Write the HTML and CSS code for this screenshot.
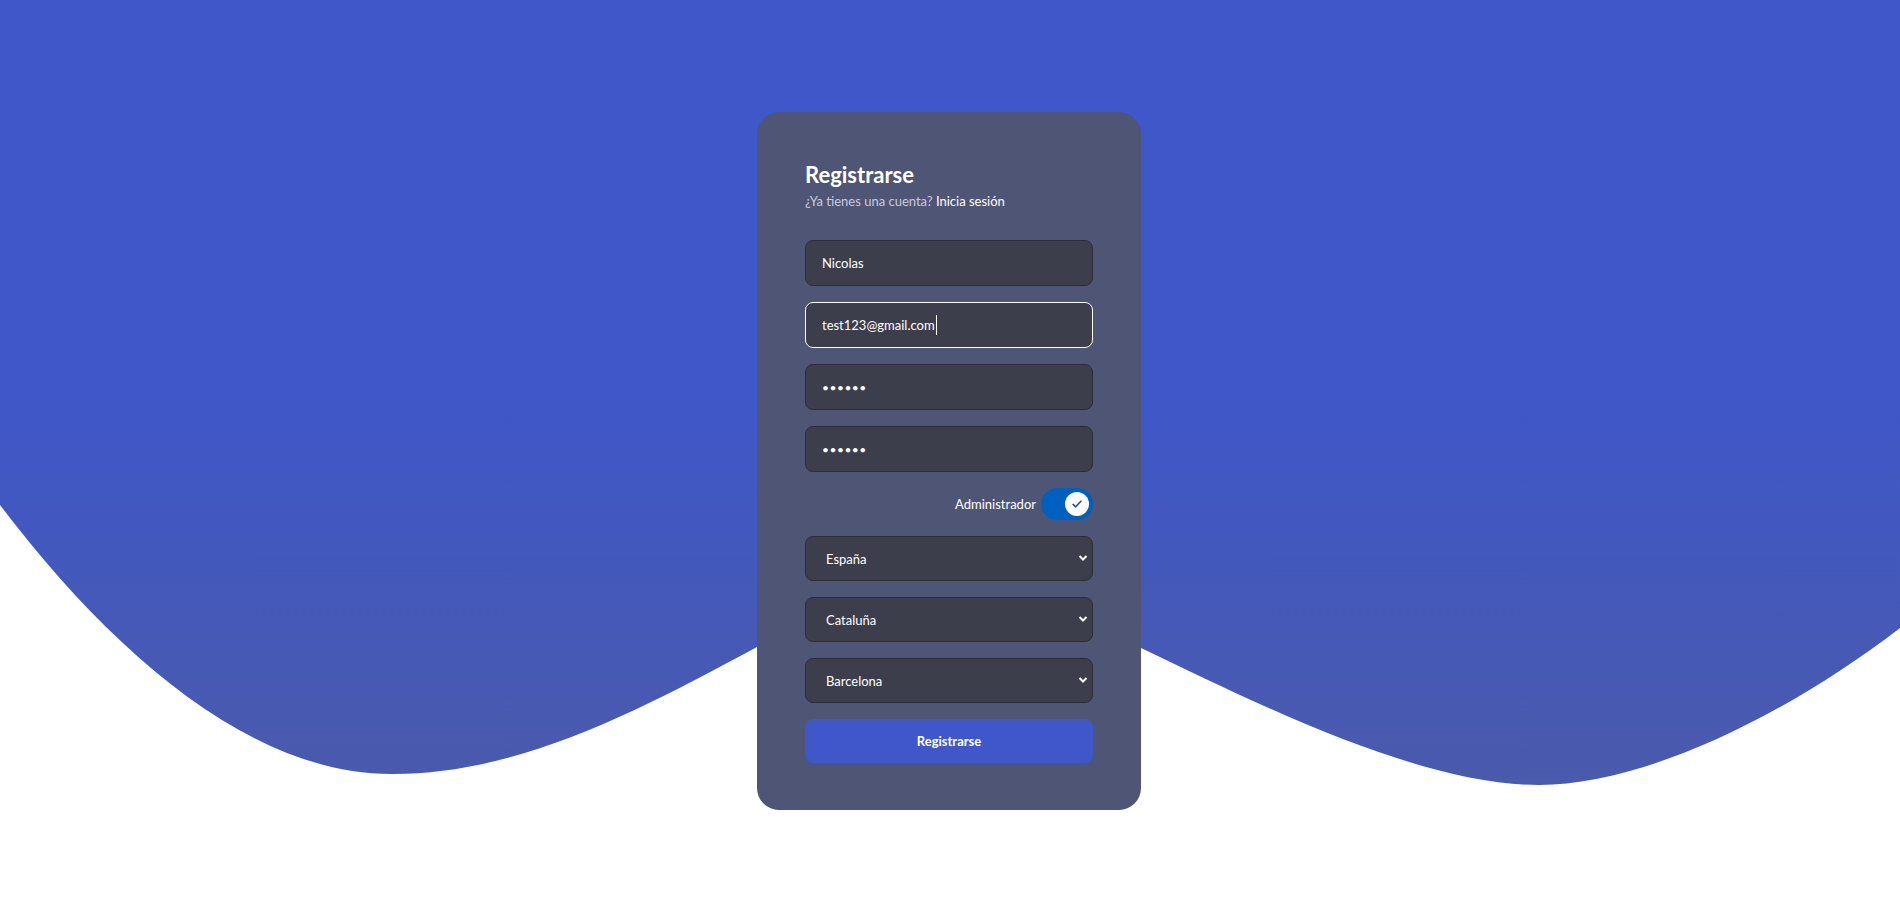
FILE: index.html
```html
<!DOCTYPE html>
<html lang="es">
<head>
<meta charset="utf-8">
<title>Registrarse</title>
<link rel="stylesheet" href="styles.css">
</head>
<body>
<svg class="wave" viewBox="0 0 1900 920" preserveAspectRatio="none" aria-hidden="true">
  <defs>
    <linearGradient id="wg" x1="0" y1="400" x2="0" y2="790" gradientUnits="userSpaceOnUse">
      <stop offset="0" stop-color="#3f57c8"/>
      <stop offset="1" stop-color="#4a5aab"/>
    </linearGradient>
  </defs>
  <path fill="url(#wg)" d="M0,0 H1900 V628 C1780,720 1640,785 1539,785 C1420,785 1260,705 1141,648 C1070,614 1010,590 950,590 C880,590 830,608 757,647 C640,710 520,774 393,774 C250,775 110,650 0,505 Z"/>
</svg>
<main class="page">
  <section class="card">
    <header class="card-head">
      <h1 class="title">Registrarse</h1>
      <p class="subtitle">¿Ya tienes una cuenta? <a class="link" href="#">Inicia sesión</a></p>
    </header>
    <form class="form">
      <input class="field" type="text" value="Nicolas">
      <div class="field-wrap">
        <input class="field field-focus" type="email" value="test123@gmail.com">
        <span class="caret"></span>
      </div>
      <input class="field field-pass" type="password" value="123456">
      <input class="field field-pass" type="password" value="123456">
      <div class="switch-row">
        <span class="switch-label">Administrador</span>
        <span class="switch">
          <span class="knob">
            <svg viewBox="0 0 16 16" width="14" height="14"><path d="M3.5 8.5 L6.5 11.2 L12.5 4.8" fill="none" stroke="#1d4f9a" stroke-width="1.8" stroke-linecap="round" stroke-linejoin="round"/></svg>
          </span>
        </span>
      </div>
      <div class="select-wrap">
        <select class="select"><option>España</option></select>
        <svg class="chev" viewBox="0 0 10 8" width="10" height="8"><path d="M1.5 2 L5 5.5 L8.5 2" fill="none" stroke="#fff" stroke-width="2"/></svg>
      </div>
      <div class="select-wrap">
        <select class="select"><option>Cataluña</option></select>
        <svg class="chev" viewBox="0 0 10 8" width="10" height="8"><path d="M1.5 2 L5 5.5 L8.5 2" fill="none" stroke="#fff" stroke-width="2"/></svg>
      </div>
      <div class="select-wrap">
        <select class="select"><option>Barcelona</option></select>
        <svg class="chev" viewBox="0 0 10 8" width="10" height="8"><path d="M1.5 2 L5 5.5 L8.5 2" fill="none" stroke="#fff" stroke-width="2"/></svg>
      </div>
      <button class="btn" type="button">Registrarse</button>
    </form>
  </section>
</main>
</body>
</html>
```

FILE: styles.css
```css
html, body {
  margin: 0;
  padding: 0;
}
body {
  width: 1900px;
  height: 920px;
  overflow: hidden;
  background: #ffffff;
  font-family: Lato, "Noto Sans", sans-serif;
  position: relative;
}
.wave {
  position: absolute;
  left: 0;
  top: 0;
  width: 1900px;
  height: 920px;
  z-index: 0;
}
.page {
  position: relative;
  z-index: 1;
  display: flex;
  justify-content: center;
  padding-top: 112px;
}
.card {
  width: 288px;
  padding: 48px 48px 47px;
  background: #4e5575;
  border-radius: 22px;
  margin-left: -2px;
}
.card-head {
  margin-bottom: 29px;
}
.title {
  margin: 0;
  font-size: 22px;
  line-height: 29px;
  font-weight: 700;
  color: #ffffff;
}
.subtitle {
  margin: 2px 0 0;
  font-size: 13px;
  line-height: 20px;
  color: #c8cbe0;
}
.link {
  color: #ffffff;
  text-decoration: none;
}
.form {
  display: flex;
  flex-direction: column;
  gap: 16px;
}
.field-wrap {
  position: relative;
  display: flex;
}
.field {
  box-sizing: border-box;
  height: 46px;
  width: 100%;
  padding: 0 16px;
  background: #3d3e4b;
  border: 1px solid #2c2d38;
  border-radius: 8px;
  color: #ffffff;
  font-family: inherit;
  font-size: 13px;
  outline: none;
  caret-color: #ffffff;
}
.field-focus {
  border-color: #ffffff;
}
.caret {
  position: absolute;
  left: 131px;
  top: 13px;
  width: 1px;
  height: 20px;
  background: #ffffff;
}
.field-pass {
  font-size: 12px;
  letter-spacing: 0.5px;
}
.switch-row {
  display: flex;
  justify-content: flex-end;
  align-items: center;
  gap: 5px;
  height: 32px;
}
.switch-label {
  color: #ffffff;
  font-size: 13px;
}
.switch {
  width: 52px;
  height: 32px;
  border-radius: 16px;
  background: #0060c0;
  display: flex;
  align-items: center;
  justify-content: flex-end;
  padding: 0 4px;
  box-sizing: border-box;
}
.knob {
  width: 24px;
  height: 24px;
  border-radius: 50%;
  background: #ffffff;
  display: flex;
  align-items: center;
  justify-content: center;
}
.select-wrap {
  position: relative;
}
.select {
  appearance: none;
  -webkit-appearance: none;
  box-sizing: border-box;
  width: 100%;
  height: 45px;
  padding: 0 30px 0 20px;
  background: #3d3e4b;
  border: 1px solid #2c2d38;
  border-radius: 8px;
  color: #ffffff;
  font-family: inherit;
  font-size: 13px;
  outline: none;
}
.chev {
  position: absolute;
  right: 5px;
  top: 18px;
  pointer-events: none;
}
.btn {
  height: 44px;
  width: 100%;
  border: none;
  border-radius: 8px;
  background: #3f57c9;
  color: #ffffff;
  font-family: inherit;
  font-size: 13px;
  font-weight: 700;
}
```
